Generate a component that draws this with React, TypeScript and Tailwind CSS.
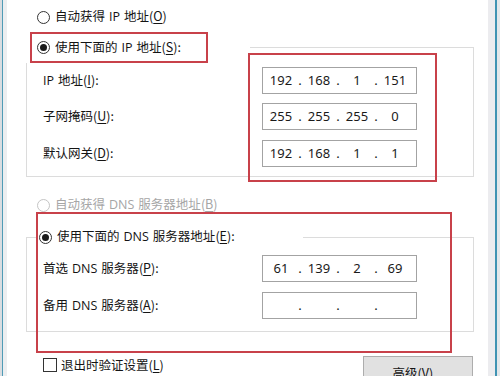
import React from 'react';

const Radio = ({ checked = false, disabled = false }: { checked?: boolean; disabled?: boolean }) => (
  <span
    className={`flex h-[13px] w-[13px] shrink-0 items-center justify-center rounded-full border bg-white ${
      disabled ? 'border-[#c4c4c4]' : 'border-[#333333]'
    }`}
  >
    {checked && <span className="h-[7px] w-[7px] rounded-full bg-[#1a1a1a]" />}
  </span>
);

// access key letter, underlined like the Windows dialog
const Key = ({ k }: { k: string }) => (
  <>
    (<span className="underline underline-offset-2">{k}</span>)
  </>
);

// latin word inside chinese label, with the wider spacing of the dialog font
const Lat = ({ t }: { t: string }) => <span className="px-[4px] font-['Open_Sans',sans-serif]">{t}</span>;

const IpBox = ({ parts }: { parts: string[] }) => (
  <div className="flex h-[27px] w-[155px] items-center border border-[#a3a3a3] bg-white pl-[3px] font-['Noto_Sans',sans-serif] text-[13px] text-[#1a1a1a]">
    {parts.map((p, i) => (
      <React.Fragment key={i}>
        <span className="w-[30px] text-center">{p}</span>
        {i < 3 && <span className="w-[8px] text-center">.</span>}
      </React.Fragment>
    ))}
  </div>
);

const FieldRow = ({ label, parts, className = '' }: { label: React.ReactNode; parts: string[]; className?: string }) => (
  <div className={`flex items-center ${className}`}>
    <span className="w-[219px]">{label}</span>
    <IpBox parts={parts} />
  </div>
);

const App: React.FC = () => {
  return (
    <div className="relative flex h-[376px] w-[500px] overflow-hidden bg-white font-['Noto_Sans_CJK_SC',sans-serif] text-[12.5px] leading-none text-[#141414]">
      {/* left window edge */}
      <div className="flex w-[7px] shrink-0">
        <div className="w-[2px] bg-[#d9dde1]" />
        <div className="w-[1px] bg-[#4f9bb6]" />
        <div className="w-[4px] bg-[#eceef0]" />
      </div>

      <div className="flex flex-1 flex-col pt-[6px]">
        {/* IP section */}
        <div className="flex h-[22px] shrink-0 items-center gap-[5px] pl-[30px]">
          <Radio />
          <span>自动获得<Lat t="IP" />地址<Key k="O" /></span>
        </div>

        <div className="mt-[4px] flex h-[31px] shrink-0">
          <div className="flex w-[243px] items-center gap-[5px] pl-[30px]">
            <Radio checked />
            <span>使用下面的<Lat t="IP" />地址<Key k="S" />:</span>
          </div>
          <div className="mt-[15px] w-[224px] border-r border-t border-[#dcdcdc]" />
        </div>

        <div className="ml-[19px] flex w-[448px] shrink-0 flex-col border-b border-l border-r border-[#dcdcdc] pb-[9px] pl-[16px] pt-[4px]">
          <FieldRow label={<><span className="pr-[4px] font-['Open_Sans',sans-serif]">IP</span>地址<Key k="I" />:</>} parts={['192', '168', '1', '151']} />
          <FieldRow className="mt-[9px]" label={<>子网掩码<Key k="U" />:</>} parts={['255', '255', '255', '0']} />
          <FieldRow className="mt-[10px]" label={<>默认网关<Key k="D" />:</>} parts={['192', '168', '1', '1']} />
        </div>

        {/* DNS section */}
        <div className="mt-[17px] flex h-[22px] shrink-0 items-center gap-[5px] pl-[30px] text-[#a6a6a6]">
          <Radio disabled />
          <span>自动获得<Lat t="DNS" />服务器地址<Key k="B" /></span>
        </div>

        <div className="mt-[10px] flex h-[22px] shrink-0">
          <div className="ml-[19px] h-[11px] w-[10px] self-end border-l border-t border-[#dcdcdc]" />
          <div className="flex w-[267px] items-center gap-[5px] pl-[3px]">
            <Radio checked />
            <span>使用下面的<Lat t="DNS" />服务器地址<Key k="E" />:</span>
          </div>
          <div className="h-[11px] w-[171px] self-end border-r border-t border-[#dcdcdc]" />
        </div>

        <div className="ml-[19px] flex w-[448px] shrink-0 flex-col border-b border-l border-r border-[#dcdcdc] pb-[12px] pl-[16px] pt-[7px]">
          <FieldRow label={<>首选<Lat t="DNS" />服务器<Key k="P" />:</>} parts={['61', '139', '2', '69']} />
          <FieldRow className="mt-[10px]" label={<>备用<Lat t="DNS" />服务器<Key k="A" />:</>} parts={['', '', '', '']} />
        </div>

        <div className="mt-[24px] flex shrink-0 items-start justify-between pl-[36px] pr-[15px]">
          <div className="flex h-[18px] items-center gap-[4px]">
            <span className="h-[14px] w-[14px] border border-[#333333] bg-white" />
            <span>退出时验证设置<Key k="L" /></span>
          </div>
          <button className="h-[28px] w-[110px] border border-[#adadad] bg-[#e1e1e1] pt-[7px] text-[12.5px]">
            高级<Key k="V" />...
          </button>
        </div>
      </div>

      {/* right window edge */}
      <div className="flex w-[12px] shrink-0">
        <div className="w-[7px] bg-[#ececef]" />
        <div className="w-[2px] bg-[#3f93b3]" />
        <div className="w-[3px] bg-[#e3e7ea]" />
      </div>

      {/* red annotation frames */}
      <div className="pointer-events-none absolute left-[30px] top-[32px] h-[31px] w-[178px] border-2 border-[#c8414a]" />
      <div className="pointer-events-none absolute left-[248px] top-[53px] h-[129px] w-[189px] border-2 border-[#c8414a]" />
      <div className="pointer-events-none absolute left-[36px] top-[212px] h-[141px] w-[416px] border-2 border-[#c8414a]" />
    </div>
  );
};

export default App;
